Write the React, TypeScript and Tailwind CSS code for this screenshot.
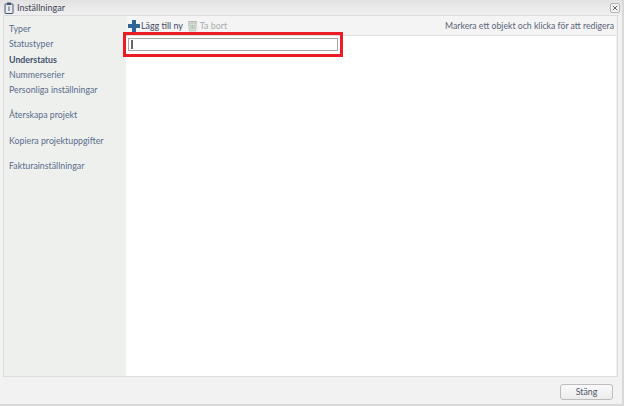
import { X } from 'lucide-react';

const font = { fontFamily: 'Lato, "Open Sans", sans-serif' };

function NavItem({ label, active, className }: { label: string; active?: boolean; className?: string }) {
  return (
    <div className={`h-[15.3px] leading-[15px] text-[8.8px] ${active ? 'font-bold text-[#44506e]' : 'text-[#5a6c8c]'} ${className ?? ''}`}>
      {label}
    </div>
  );
}

export default function App() {
  return (
    <div className="w-[624px] h-[406px] flex flex-col bg-[#d9d9d9] overflow-hidden" style={font}>
      <div className="w-[622px] h-[404px] flex flex-col bg-[#f2f2f2]">
        <header className="h-[15px] flex items-center pl-[4px] pr-[2px] bg-gradient-to-b from-[#e2e2e2] to-[#f0f0f0]">
          <svg width="10" height="12" viewBox="0 0 10 12" fill="none" className="mr-[3px]">
            <rect x="1" y="2" width="8" height="9.5" rx="0.5" stroke="#3d5470" />
            <rect x="3" y="0.5" width="4" height="2.5" fill="#3d5470" />
            <rect x="4.4" y="4.5" width="1.2" height="4.5" fill="#5d7590" />
          </svg>
          <span className="text-[9px] text-[#3f4654] leading-none">Inställningar</span>
          <button className="ml-auto w-[10px] h-[10px] flex items-center justify-center rounded-[2px] border border-[#b5b5b5] bg-[#f5f5f5]">
            <X size={8} strokeWidth={2.5} color="#444" />
          </button>
        </header>
        <div className="h-[362px] ml-[3px] mr-[4px] flex border border-[#dcdcdc] bg-[#eef0ee]">
          <nav className="w-[122px] shrink-0 pl-[5px] pt-[5px]">
            <NavItem label="Typer" />
            <NavItem label="Statustyper" />
            <NavItem label="Understatus" active />
            <NavItem label="Nummerserier" />
            <NavItem label="Personliga inställningar" />
            <NavItem label="Återskapa projekt" className="mt-[10px]" />
            <NavItem label="Kopiera projektuppgifter" className="mt-[10px]" />
            <NavItem label="Fakturainställningar" className="mt-[10px]" />
          </nav>
          <main className="flex-1 bg-white mr-px">
            <div className="h-[20px] flex items-center pl-[2px] pr-[2px] bg-[#f4f4f4] border-b border-[#dedede]">
              <svg width="12" height="12" viewBox="0 0 12 12">
                <path d="M4 0h4v4h4v4H8v4H4V8H0V4h4z" fill="#2f6496" />
              </svg>
              <span className="ml-[1px] text-[8.9px] text-[#3f4a66]">Lägg till ny</span>
              <svg width="11" height="12" viewBox="0 0 11 12" className="ml-[4px]">
                <rect x="1" y="1" width="9" height="1.5" fill="#b7c2b7" />
                <path d="M1.5 3h8l-.8 8H2.3z" fill="#d3e0d3" stroke="#aab4aa" strokeWidth="0.6" />
                <path d="M4 5v4M5.5 5v4M7 5v4" stroke="#9fb09f" strokeWidth="0.6" />
              </svg>
              <span className="ml-[2px] text-[8.9px] text-[#a9adb0]">Ta bort</span>
              <span className="ml-auto text-[8.7px] text-[#5a6478]">Markera ett objekt och klicka för att redigera</span>
            </div>
            <div className="pl-[2px] pt-[2px]">
              <div className="relative w-[210px] h-[13px] flex items-center pl-[2px] bg-white border-[1.5px] border-[#a8a8a8]">
                <div className="w-[1.5px] h-[9px] bg-[#666]" />
                <div className="absolute -left-[6.5px] -top-[7.5px] w-[220px] h-[25px] border-[3px] border-[#ec1c24]" />
              </div>
            </div>
          </main>
        </div>
        <footer className="flex-1 flex justify-end items-start pt-[7px] pr-[9px]">
          <button className="w-[53px] h-[16px] rounded-[3px] border border-[#bdbdbd] bg-gradient-to-b from-[#fafafa] to-[#ececec] text-[8.8px] leading-none text-[#4a566a]">
            Stäng
          </button>
        </footer>
      </div>
    </div>
  );
}
